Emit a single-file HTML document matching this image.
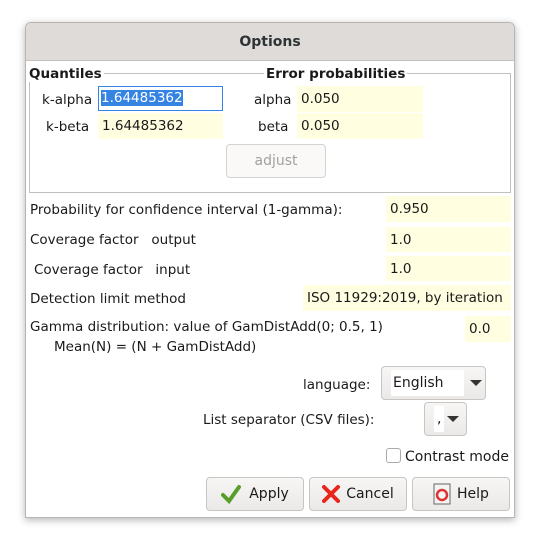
<!DOCTYPE html><html><head><style>
body{margin:0;width:540px;height:547px;background:#fff;font-family:"DejaVu Sans","Liberation Sans",sans-serif;font-size:13.5px;color:#1a1a1a;position:relative;overflow:hidden}
.a{position:absolute;white-space:nowrap}
.f{position:absolute;background:#fffee0;box-sizing:border-box;padding-left:4px;line-height:26px}
.btn{position:absolute;box-sizing:border-box;border:1px solid #c8c5c2;border-radius:4px;background:linear-gradient(#f7f6f5,#ebe9e7);display:flex;align-items:center;justify-content:center;font-size:14px}
</style></head><body>
<div class="a" style="left:25px;top:22px;width:490px;height:496px;border:1px solid #b8b5b2;border-radius:6px 6px 0 0;box-shadow:0 2px 8px rgba(0,0,0,.3);background:#fff;box-sizing:border-box"></div>
<div class="a" style="left:26px;top:23px;width:488px;height:37px;background:#dedbd8;border-bottom:1px solid #c4c1bd;border-radius:5px 5px 0 0;text-align:center;line-height:38px;font-weight:bold;font-size:14px;color:#2e3436">Options</div>
<div class="a" style="left:29px;top:73px;width:482px;height:120px;border:1px solid #c0c0c0;box-sizing:border-box"></div>
<div class="a" style="left:29px;top:66px;font-weight:bold;background:#fff;padding-right:2px">Quantiles</div>
<div class="a" style="left:264px;top:66px;font-weight:bold;background:#fff;padding:0 2px">Error probabilities</div>
<div class="a" style="left:42px;top:92px">k-alpha</div>
<div class="f" style="left:98px;top:86px;width:125px;height:25px;background:#fff;border:1px solid #3584e4;line-height:23px;padding-left:2px"><span style="background:#3584e4;color:#fff">1.64485362</span></div>
<div class="a" style="left:46px;top:119px">k-beta</div>
<div class="f" style="left:98px;top:113px;width:125px;height:26px">1.64485362</div>
<div class="a" style="left:254px;top:92px">alpha</div>
<div class="f" style="left:297px;top:86px;width:126px;height:26px">0.050</div>
<div class="a" style="left:258px;top:119px">beta</div>
<div class="f" style="left:297px;top:113px;width:126px;height:26px">0.050</div>
<div class="btn" style="left:226px;top:144px;width:100px;height:34px;background:#faf9f8;color:#a0a0a0;border-color:#d5d3d0">adjust</div>
<div class="a" style="left:30px;top:202px">Probability for confidence interval (1-gamma):</div>
<div class="f" style="left:386px;top:196px;width:125px;height:26px">0.950</div>
<div class="a" style="left:30px;top:232px">Coverage factor&nbsp;&nbsp; output</div>
<div class="f" style="left:386px;top:227px;width:125px;height:25px">1.0</div>
<div class="a" style="left:34px;top:262px">Coverage factor&nbsp;&nbsp; input</div>
<div class="f" style="left:386px;top:256px;width:125px;height:25px">1.0</div>
<div class="a" style="left:30px;top:291px">Detection limit method</div>
<div class="f" style="left:303px;top:285px;width:208px;height:26px">ISO 11929:2019, by iteration</div>
<div class="a" style="left:30px;top:319px">Gamma distribution: value of GamDistAdd(0; 0.5, 1)</div>
<div class="a" style="left:54px;top:339px">Mean(N) = (N + GamDistAdd)</div>
<div class="f" style="left:465px;top:316px;width:46px;height:26px">0.0</div>
<div class="a" style="left:303px;top:377px">language:</div>
<div class="btn" style="left:381px;top:366px;width:105px;height:34px;justify-content:flex-start;padding-left:9px"><span style="background:#fff;padding:0 5px 0 2px;line-height:26px;width:66px">English</span><span style="margin-left:6px;border:6px solid transparent;border-top:6px solid #333;border-bottom:0"></span></div>
<div class="a" style="left:203px;top:412px">List separator (CSV files):</div>
<div class="btn" style="left:424px;top:402px;width:43px;height:34px;justify-content:flex-start;padding-left:9px"><span style="background:#fff;line-height:26px;padding:0 3px">,</span><span style="margin-left:3px;border:6px solid transparent;border-top:6px solid #333;border-bottom:0"></span></div>
<div class="a" style="left:386px;top:448px;width:15px;height:15px;border:1px solid #aaa;border-radius:3px;box-sizing:border-box"></div>
<div class="a" style="left:405px;top:449px;font-size:14px">Contrast mode</div>
<div class="btn" style="left:206px;top:477px;width:98px;height:34px"><svg width="20" height="20" viewBox="0 0 20 20" style="margin-right:8px"><path d="M2 11 L8 17 L18 3" stroke="#5a9e2a" stroke-width="4" fill="none" stroke-linecap="round"/></svg>Apply</div>
<div class="btn" style="left:309px;top:477px;width:98px;height:34px"><svg width="18" height="18" viewBox="0 0 18 18" style="margin-right:6px"><path d="M2 2 L16 16 M16 2 L2 16" stroke="#e8261c" stroke-width="4" stroke-linecap="round"/></svg>Cancel</div>
<div class="btn" style="left:412px;top:477px;width:98px;height:34px"><svg width="18" height="22" viewBox="0 0 18 22" style="margin-right:6px"><rect x="1" y="1" width="16" height="20" fill="#f4f4f4" stroke="#666"/><circle cx="9" cy="12" r="5" fill="none" stroke="#d33" stroke-width="2.5"/></svg>Help</div>
</body></html>
